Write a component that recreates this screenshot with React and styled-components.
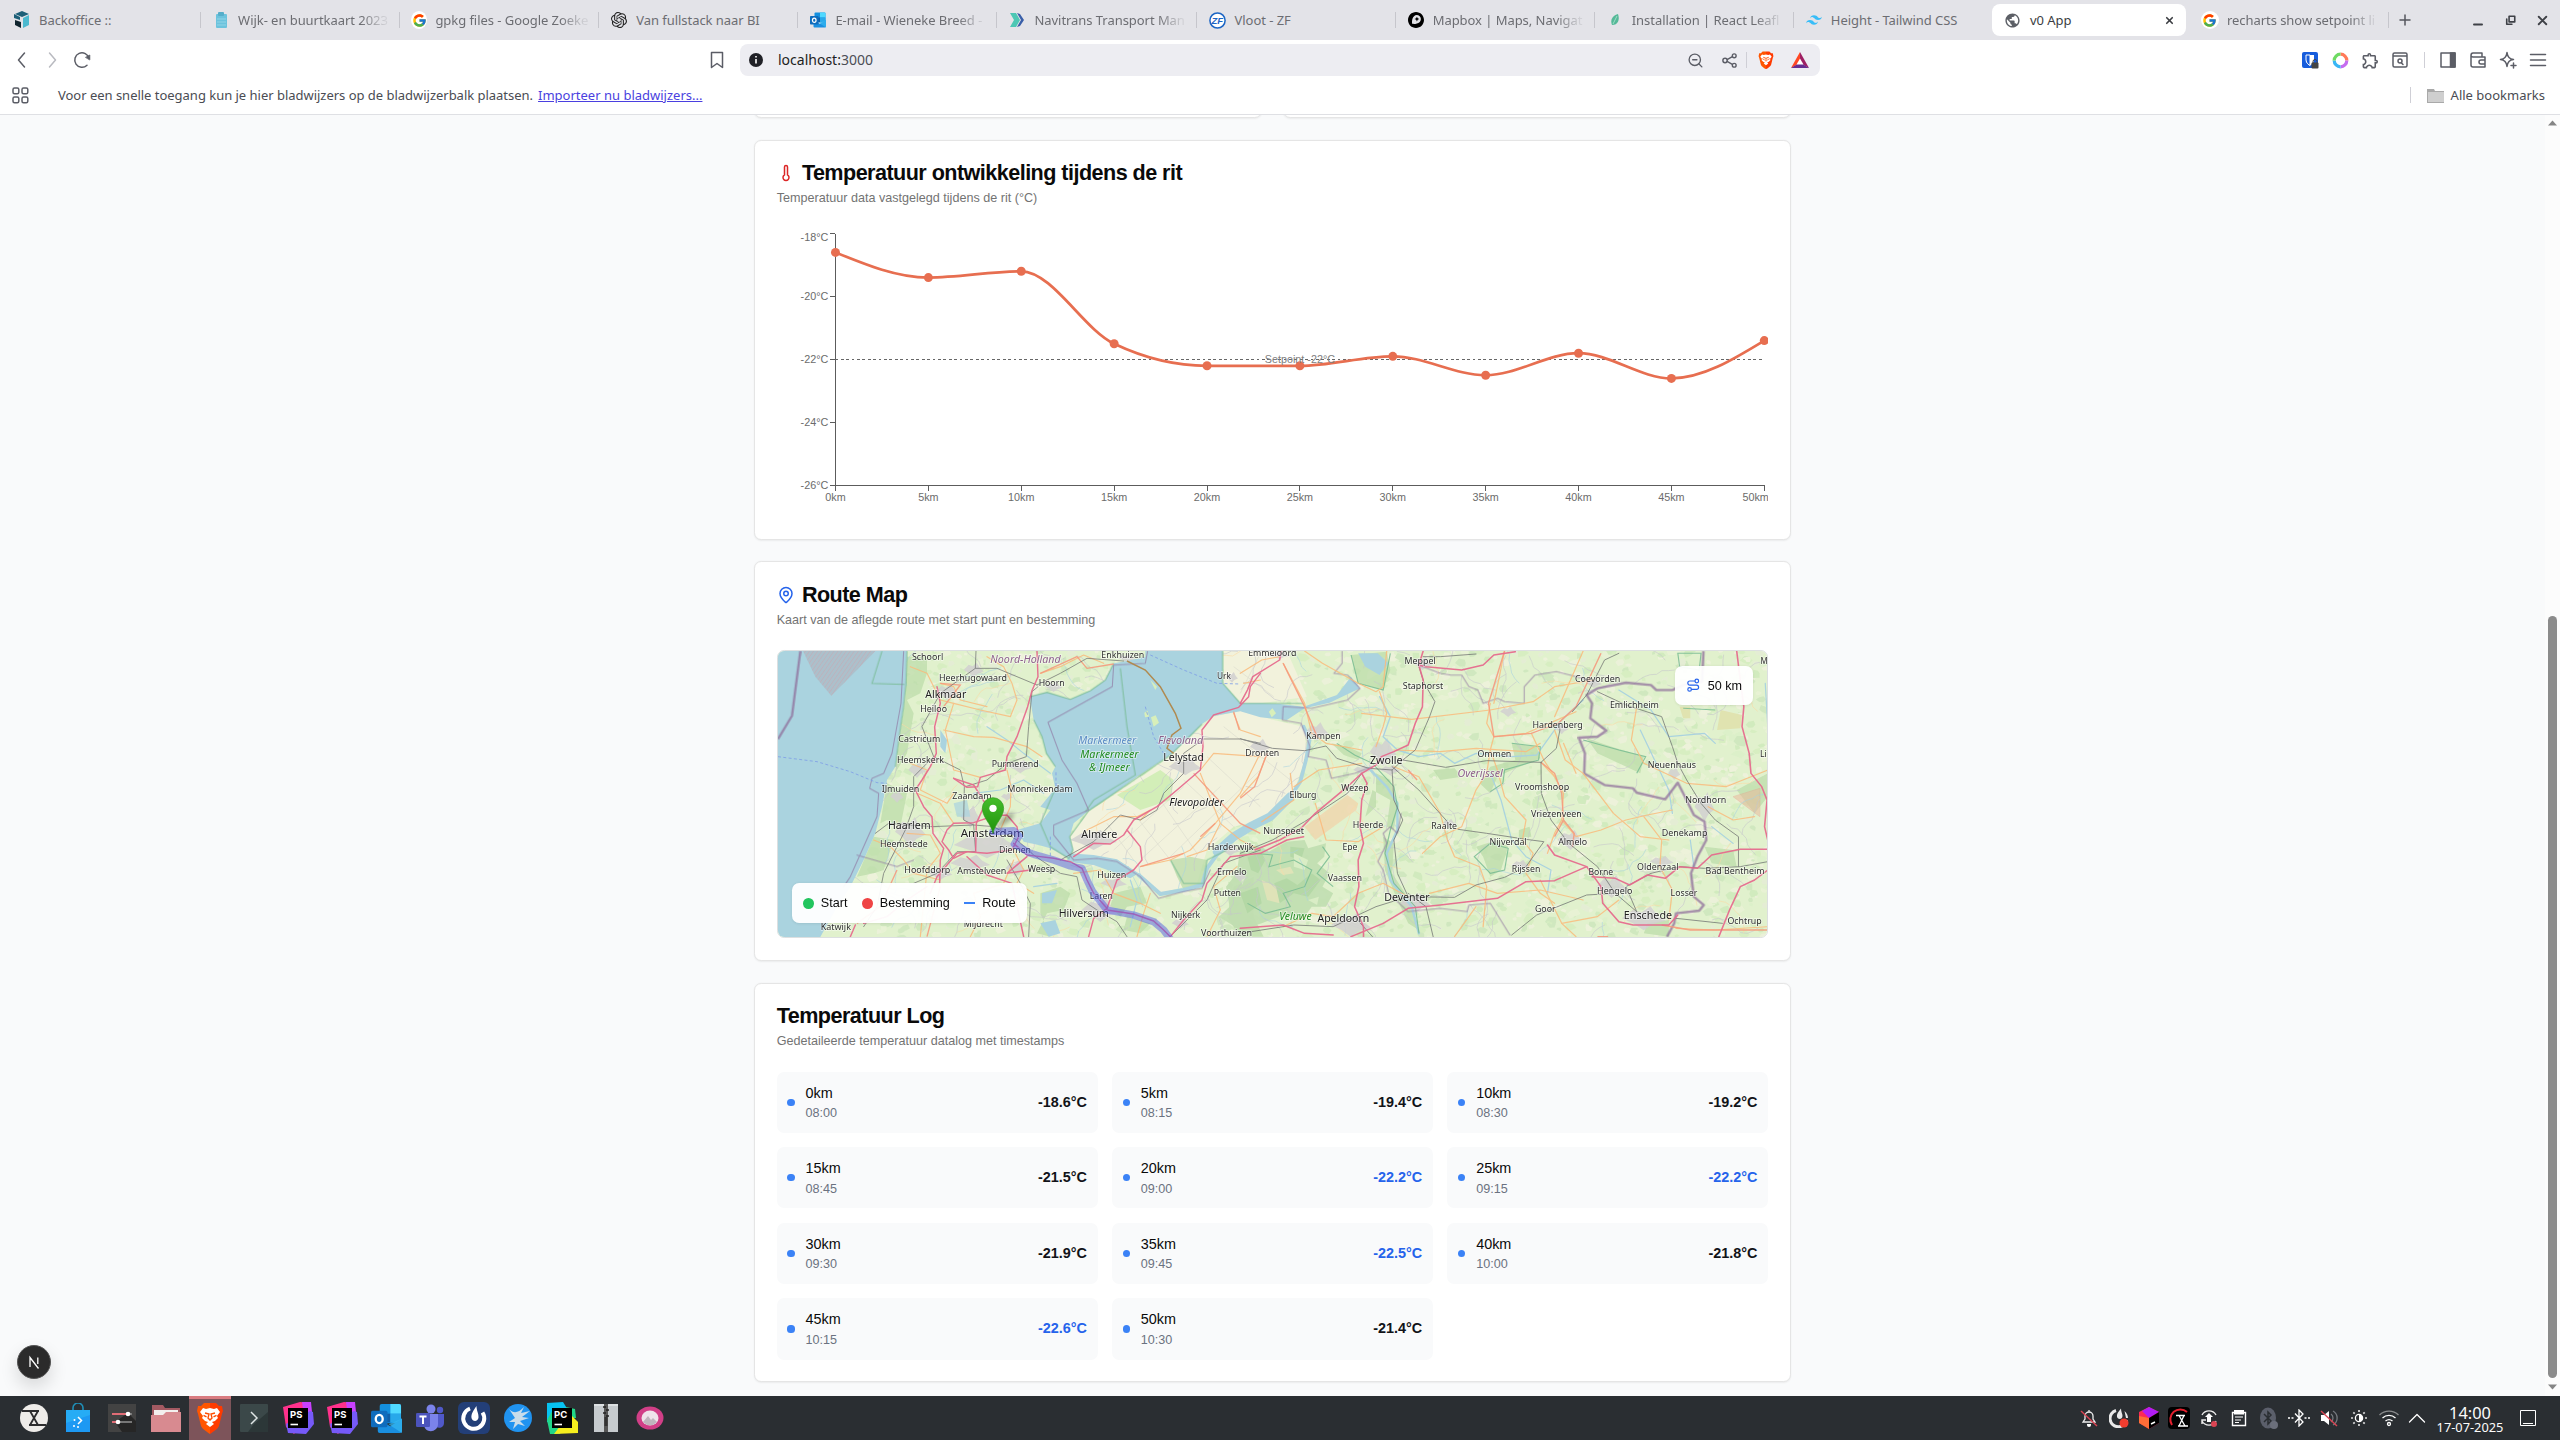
import React from 'react';
import styled, { createGlobalStyle, css } from 'styled-components';
import { ZoomOut, Thermometer, MapPin, Route as RouteIcon, X } from 'lucide-react';
import { FcGoogle } from 'react-icons/fc';
import { MdPublic, MdOutlineExtension } from 'react-icons/md';
import { SiTailwindcss, SiOpenai, SiMapbox } from 'react-icons/si';

const GlobalStyle = createGlobalStyle`
  * { box-sizing: border-box; }
  html, body { margin: 0; padding: 0; overflow: hidden; }
  body { background: #f9fafb; }
  svg { display: block; flex: none; }
`;

const sans = `"Liberation Sans", Arial, sans-serif`;
const noto = `"Noto Sans", sans-serif`;

/* ---------- shell ---------- */
const Screen = styled.div`
  width: 2560px;
  height: 1440px;
  display: flex;
  flex-direction: column;
  overflow: hidden;
  font-family: ${noto};
`;

const TabStrip = styled.div`
  height: 40px;
  flex: none;
  display: flex;
  align-items: center;
  padding-left: 2px;
  background: #e3e3e8;
`;

const Tab = styled.div`
  width: 199.1px;
  height: 32px;
  flex: none;
  display: flex;
  align-items: center;
  position: relative;
  padding: 0 11px 0 12px;
  gap: 9px;
  color: #6c6d72;
  font-size: 13px;
  ${(p) => p.$line && css`
    &::after {
      content: '';
      position: absolute;
      right: 0;
      top: 8px;
      width: 1px;
      height: 16px;
      background: #c6c6cc;
    }
  `}
  ${(p) => p.$active && css`
    width: 194px;
    margin: 0 4px 0 -1px;
    background: #fff;
    border-radius: 8px;
    color: #3b3d42;
  `}
`;

const TabTitle = styled.span`
  flex: 1;
  white-space: nowrap;
  letter-spacing: -0.05px;
  ${(p) => p.$fade && css`
    mask-image: linear-gradient(90deg, #000 calc(100% - 28px), rgba(0, 0, 0, 0.15) calc(100% - 4px));
  `}
`;

const GoogleChip = styled.span`
  width: 18px;
  height: 18px;
  margin: 0 -1px;
  display: grid;
  place-items: center;
  background: #fff;
  border-radius: 50%;
`;

const NewTab = styled.div`
  width: 32px;
  display: grid;
  place-items: center;
`;

const WindowButtons = styled.div`
  margin-left: auto;
  display: flex;
  padding-right: 1px;
`;

const WindowButton = styled.div`
  width: 32.6px;
  display: grid;
  place-items: center;
`;

const Toolbar = styled.div`
  height: 40px;
  flex: none;
  display: flex;
  align-items: center;
  background: #fff;
  color: #5b5d66;
`;

const Slot = styled.div`
  width: ${(p) => p.$w || 30}px;
  display: grid;
  place-items: center;
  ${(p) => p.$push && css`margin-left: auto;`}
`;

const NavGroup = styled.div`
  width: 702px;
  display: flex;
  padding-left: 7px;
`;

const AddressBar = styled.div`
  width: 1080px;
  height: 32px;
  margin-left: 8px;
  display: flex;
  align-items: center;
  padding: 0 5px 0 8px;
  border-radius: 8px;
  background: #ededf2;
`;

const Address = styled.span`
  margin-left: 14px;
  font-size: 14px;
  line-height: 18px;
  margin-top: -1px;
  color: #4c4e56;
  b { font-weight: 400; color: #1d1e22; }
`;

const Divider = styled.div`
  width: 1px;
  height: 16px;
  background: #cfcfd6;
`;

const ToolGroup = styled.div`
  margin-left: auto;
  padding-right: 7px;
  display: flex;
  align-items: center;
`;

const BookmarkBar = styled.div`
  height: 35px;
  flex: none;
  display: flex;
  align-items: center;
  background: #fff;
  border-bottom: 1px solid #dfe0e4;
  padding: 0 15px 4px 12px;
  font-size: 13px;
  color: #4a4c53;
`;

const BookmarkHint = styled.span`
  margin-left: 29px;
  white-space: nowrap;
  letter-spacing: -0.02px;
`;

const HintLink = styled.span`
  margin-left: 5px;
  color: #4a3fe0;
  text-decoration: underline;
`;

const AllBookmarks = styled.div`
  margin-left: auto;
  display: flex;
  align-items: center;
  gap: 7px;
  white-space: nowrap;
  svg { margin-left: 9px; }
`;

const Body = styled.div`
  height: 1281px;
  flex: none;
  display: flex;
  background: #f9fafb;
  position: relative;
`;

const Viewport = styled.div`
  width: 2545px;
  height: 1281px;
  overflow: hidden;
  display: flex;
  flex-direction: column;
  justify-content: flex-end;
  align-items: center;
`;

const ScrollTrack = styled.div`
  width: 15px;
  display: flex;
  flex-direction: column;
  align-items: center;
  background: #fcfcfc;
  padding: 5px 0 6px;
`;

const Thumb = styled.div`
  width: 9px;
  height: 762px;
  margin-top: auto;
  margin-bottom: 6px;
  border-radius: 5px;
  background: #8b8b8b;
`;

/* ---------- page, rendered at 90% browser zoom ---------- */
const Page = styled.main`
  zoom: 0.9;
  width: 1152px;
  flex: none;
  display: flex;
  flex-direction: column;
  gap: 24px;
  padding-bottom: 15.3px;
  font-family: ${sans};
  color: #0a0a0a;
`;

const Card = styled.section`
  background: #fff;
  border: 1px solid #e5e5e5;
  border-radius: 8px;
  box-shadow: 0 1px 2px rgba(0, 0, 0, 0.06);
`;

const SummaryRow = styled.div`
  display: grid;
  grid-template-columns: 1fr 1fr;
  gap: 24px;
`;

const SummaryCard = styled(Card)`
  height: 120px;
`;

const CardHeader = styled.header`
  display: flex;
  flex-direction: column;
  gap: 6px;
  padding: 24px;
`;

const CardTitle = styled.h2`
  margin: 0;
  display: flex;
  align-items: center;
  gap: 8px;
  font-size: 24px;
  line-height: 24px;
  font-weight: 600;
  letter-spacing: -0.6px;
`;

const CardText = styled.p`
  margin: 0;
  font-size: 14px;
  line-height: 20px;
  color: #737373;
`;

const CardBody = styled.div`
  padding: 0 24px 24px;
`;

const ChartSvg = styled.svg`
  width: 1102px;
  height: 320px;
  overflow: hidden;
  font-family: ${sans};
  font-size: 12px;
  fill: #6b6b6b;
`;

const MapFrame = styled.div`
  position: relative;
  height: 320px;
  border: 1px solid #dcdfe0;
  border-radius: 8px;
  overflow: hidden;
`;

const MapSvg = styled.svg`
  width: 100%;
  height: 100%;
`;

const MapPanel = styled.div`
  position: absolute;
  ${(p) => (p.$corner === 'top' ? 'top: 16px; right: 16px;' : 'bottom: 16px; left: 16px;')}
  display: flex;
  align-items: center;
  gap: ${(p) => (p.$corner === 'top' ? 8 : 16)}px;
  padding: 12px;
  border-radius: 8px;
  background: rgba(255, 255, 255, 0.95);
  box-shadow: 0 1px 3px rgba(0, 0, 0, 0.08);
  font-size: 14px;
  line-height: 20px;
  white-space: nowrap;
`;

const LegendItem = styled.div`
  display: flex;
  align-items: center;
  gap: 8px;
`;

const LegendMark = styled.span`
  width: 12px;
  height: ${(p) => (p.$line ? 2.23 : 12)}px;
  border-radius: ${(p) => (p.$line ? 0 : 6)}px;
  background: ${(p) => p.$color};
`;

const LogGrid = styled.div`
  display: grid;
  grid-template-columns: repeat(3, 1fr);
  gap: 16px;
`;

const LogItem = styled.div`
  display: flex;
  align-items: center;
  gap: 12px;
  padding: 12px;
  border-radius: 8px;
  background: #f9fafb;
`;

const LogDot = styled.span`
  width: 8px;
  height: 8px;
  border-radius: 50%;
  background: #3b82f6;
`;

const LogPlace = styled.div`
  flex: 1;
  font-size: 16px;
  line-height: 24px;
`;

const LogTime = styled.div`
  font-size: 14px;
  line-height: 20px;
  color: #6b7280;
`;

const LogValue = styled.div`
  font-size: 16px;
  line-height: 24px;
  font-weight: 600;
  color: ${(p) => (p.$cold ? '#2563eb' : '#111318')};
`;

const DevBadge = styled.div`
  position: absolute;
  left: 17px;
  bottom: 17px;
  width: 34px;
  height: 34px;
  display: grid;
  place-items: center;
  border-radius: 50%;
  border: 1px solid #555;
  background: #2b2b2b;
  box-shadow: 0 8px 18px rgba(0, 0, 0, 0.14);
`;

/* ---------- desktop panel ---------- */
const Taskbar = styled.footer`
  height: 44px;
  flex: none;
  display: flex;
  align-items: center;
  padding: 0 14px 0 12px;
  background: #2a2e32;
  color: #fcfcfc;
`;

const Launcher = styled.div`
  width: 44px;
  height: 44px;
  display: grid;
  place-items: center;
  ${(p) => p.$active && css`
    background: linear-gradient(#d97b80 0 3px, #7d545a 3px);
    background-size: 42px 44px;
    background-repeat: no-repeat;
    background-position: 1px 0;
  `}
`;

const Tray = styled.div`
  margin-left: auto;
  display: flex;
  align-items: center;
`;

const Clock = styled.div`
  width: 80px;
  padding-top: 1px;
  display: flex;
  flex-direction: column;
  align-items: center;
  font-size: 16.4px;
  line-height: 17px;
  small { font-size: 12.8px; line-height: 13px; }
`;

/* ---------- temperature data ---------- */
const readings = [
  ['0km', '08:00', -18.6], ['5km', '08:15', -19.4], ['10km', '08:30', -19.2],
  ['15km', '08:45', -21.5], ['20km', '09:00', -22.2], ['25km', '09:15', -22.2],
  ['30km', '09:30', -21.9], ['35km', '09:45', -22.5], ['40km', '10:00', -21.8],
  ['45km', '10:15', -22.6], ['50km', '10:30', -21.4],
];

const points = readings.map(([, , t], i) => [65 + i * 103.2, 5 + (-18 - t) * 35]);

function monotonePath(p) {
  const n = p.length;
  const slope = (i) => (p[i + 1][1] - p[i][1]) / (p[i + 1][0] - p[i][0]);
  const m = p.map((_, i) => {
    if (i === 0 || i === n - 1) return null;
    const a = slope(i - 1);
    const b = slope(i);
    return (Math.sign(a) + Math.sign(b)) * Math.min(Math.abs(a), Math.abs(b), 0.25 * Math.abs(a + b)) || 0;
  });
  m[0] = (3 * slope(0) - m[1]) / 2;
  m[n - 1] = (3 * slope(n - 2) - m[n - 2]) / 2;
  let d = `M${p[0]}`;
  for (let i = 0; i < n - 1; i += 1) {
    const h = (p[i + 1][0] - p[i][0]) / 3;
    d += `C${p[i][0] + h},${p[i][1] + m[i] * h} ${p[i + 1][0] - h},${p[i + 1][1] - m[i + 1] * h} ${p[i + 1]}`;
  }
  return d;
}

function TemperatureChart() {
  const ticks = [-18, -20, -22, -24, -26];
  return (
    <ChartSvg viewBox="0 0 1102 320">
      <g stroke="#5c5c5c" strokeWidth="1.11" fill="none" shapeRendering="crispEdges">
        <path d="M65 5V285H1097" />
        {ticks.map((t) => <path key={t} d={`M59 ${5 + (-18 - t) * 35}h6`} />)}
        {points.map(([x]) => <path key={x} d={`M${x} 285v6`} />)}
      </g>
      {ticks.map((t) => (
        <text key={t} x="57" y={(t === -18 ? 9.5 : 5 + (-18 - t) * 35) + 4.3} textAnchor="end">{`${t}°C`}</text>
      ))}
      {readings.map(([km], i) => (
        <text key={km} x={i === 10 ? 1102 : points[i][0]} y="301.8" textAnchor={i === 10 ? 'end' : 'middle'}>{km}</text>
      ))}
      <path d="M65 145H1097" stroke="#666" strokeWidth="1.11" strokeDasharray="3 3" shapeRendering="crispEdges" />
      <path d={monotonePath(points)} fill="none" stroke="#e76e50" strokeWidth="3" />
      {points.map(([x, y]) => <circle key={x} cx={x} cy={y} r="5" fill="#e76e50" />)}
      <text x="581" y="149.3" textAnchor="middle" fill="#808080">Setpoint -22°C</text>
    </ChartSvg>
  );
}

/* ---------- route map ---------- */
const eastX = (x) => 1500 + x * 1.0714;
const EAST = 'translate(1500 300) scale(1.0714 1)';

const places = [
  ['Schoorl', 515, 609, 351], ['Noord-Holland', 750, 961, 358, 'region'], ['Enkhuizen', 1083, 1212, 345],
  ['Heerhugowaard', 596, 800, 412], ['Alkmaar', 555, 678, 463, 'city'], ['Hoorn', 895, 973, 427],
  ['Heiloo', 540, 620, 505], ['Castricum', 474, 600, 596], ['Heemskerk', 470, 611, 658],
  ['IJmuiden', 424, 537, 746], ['Haarlem', 443, 571, 855, 'city'], ['Heemstede', 419, 562, 913],
  ['Hoofddorp', 492, 630, 989], ['Amstelveen', 651, 798, 993], ['Zaandam', 636, 754, 769],
  ['Purmerend', 754, 895, 672], ['Monnickendam', 801, 997, 746], ['Amsterdam', 661, 851, 881, 'city'],
  ['Diemen', 776, 872, 929], ['Weesp', 862, 945, 987], ['Almere', 1023, 1131, 884, 'city'],
  ['Huizen', 1071, 1158, 1004], ['Laren', 1048, 1118, 1067], ['Hilversum', 955, 1106, 1119, 'city'],
  ['Markermeer', 1014, 1188, 600, 'lake'], ['Markermeer', 1020, 1195, 642, 'nature'], ['& IJmeer', 1046, 1168, 681, 'nature'],
  ['Flevoland', 1253, 1389, 600, 'region'], ['Lelystad', 1269, 1391, 652, 'city'], ['Flevopolder', 1287, 1450, 786, 'island'],
  ['Urk', 1430, 1472, 408], ['Harderwijk', 1402, 1540, 922], ['Ermelo', 1430, 1519, 997],
  ['Putten', 1420, 1502, 1060], ['Nijkerk', 1292, 1380, 1126], ['Voorthuizen', 1382, 1535, 1178],
  ['Mijdrecht', 670, 788, 1152], ['Katwijk', 241, 332, 1160],
];

const eastPlaces = [
  ['Emmeloord', 22, 157, 38], ['Meppel', 460, 547, 62], ['Staphorst', 455, 568, 138], ['Kampen', 185, 281, 286],
  ['Dronten', 14, 109, 338], ['Zwolle', 363, 454, 360, 'city'], ['Wezep', 283, 359, 444], ['Elburg', 138, 213, 465],
  ['Nunspeet', 64, 178, 572], ['Heerde', 315, 400, 554], ['Epe', 286, 328, 621], ['Vaassen', 245, 341, 713],
  ['Deventer', 403, 530, 772, 'city'], ['Apeldoorn', 216, 361, 834, 'city'], ['Veluwe', 109, 200, 828, 'nature'],
  ['Raalte', 535, 607, 559], ['Ommen', 664, 759, 342], ['Overijssel', 608, 735, 399, 'region'],
  ['Hardenberg', 818, 959, 254], ['Coevorden', 937, 1064, 115], ['Emlichheim', 1035, 1172, 194],
  ['Vroomshoop', 769, 921, 440], ['Vriezenveen', 814, 956, 522], ['Nijverdal', 698, 802, 605],
  ['Almelo', 890, 971, 607], ['Rijssen', 760, 840, 688], ['Borne', 975, 1044, 695], ['Hengelo', 999, 1098, 753],
  ['Goor', 825, 883, 807], ['Enschede', 1074, 1209, 825, 'city'], ['Oldenzaal', 1111, 1227, 680],
  ['Denekamp', 1180, 1308, 578], ['Nordhorn', 1246, 1361, 480], ['Neuenhaus', 1141, 1276, 375],
  ['Losser', 1205, 1280, 759], ['Bad Bentheim', 1303, 1468, 694], ['Ochtrup', 1364, 1460, 842],
  ['Li', 1455, 1474, 342], ['M', 1457, 1477, 61],
].map(([n, a, b, y, k]) => [n, eastX(a), eastX(b), y + 300, k]);

const labelColor = { region: '#8d618b', lake: '#5a8bc4', nature: '#1f8a1f', island: '#1c1c1c', city: '#222' };

const towns = [
  [620, 455, 34, 24], [700, 390, 30, 22], [940, 440, 26, 16], [510, 875, 46, 44], [470, 770, 20, 18], [530, 690, 26, 24],
  [690, 830, 30, 34], [740, 915, 100, 40], [690, 970, 60, 26], [840, 680, 36, 20], [1060, 900, 70, 30], [1335, 680, 50, 26],
  [1080, 1110, 56, 36], [1470, 930, 30, 18], [600, 1000, 36, 20], [825, 985, 30, 24], [1160, 355, 26, 12], [1475, 412, 18, 16],
  [1320, 1150, 26, 16], [1500, 1010, 18, 16], [1120, 1030, 40, 18], [800, 770, 18, 12],
].concat([
  [215, 275, 34, 28], [55, 320, 30, 24], [400, 335, 40, 42], [420, 390, 30, 16], [310, 855, 60, 36], [490, 790, 46, 30], [510, 70, 30, 20],
  [585, 550, 20, 14], [925, 600, 40, 30], [1040, 740, 46, 34], [1130, 835, 66, 36], [1180, 665, 36, 18], [1300, 500, 30, 44],
  [785, 675, 26, 16], [750, 215, 24, 16], [900, 265, 20, 18], [990, 130, 24, 14], [1215, 400, 18, 20], [340, 390, 26, 14], [110, 45, 34, 12],
].map(([x, y, a, b]) => [eastX(x), y + 300, a, b]));

const motorways = [
  'M890 333L893 410L875 452L862 500L830 590L800 650L795 690L720 712L712 740L680 742L640 715',
  'M590 440L600 490L583 560L588 640L570 680L545 720L525 750L550 800L575 830L578 880L610 925L600 960L598 1030',
  'M640 715L700 735L735 790L708 850L706 935',
  'M640 850L700 848L760 828L800 825L830 860L835 890L815 930L740 940L680 935L640 955L625 930L605 905L620 870L640 850',
  'M680 935L650 940L590 1010L570 1060M680 950L740 1005L815 1030L850 1190',
  'M820 910L860 945L940 955L990 965L1025 985L1040 1020L1060 1060L1100 1105L1060 1135L1045 1190',
  'M860 950L800 1000L870 990M1100 1110L1180 1122L1240 1143L1270 1170L1290 1190',
  'M1000 950L1060 910L1110 912L1150 885L1180 840L1250 800L1310 750L1380 690L1388 620L1385 570L1420 525L1495 502L1525 470L1530 440L1560 400',
  'M1160 870L1200 920L1205 960L1180 990L1130 1020L1100 1105',
  'M1290 1190L1330 1140L1385 1080L1400 1030L1470 950L1560 940L1640 900L1690 890',
  'M370 1150L440 1130L500 1080L560 1040M330 1190L345 1155',
];
const eastMotorways = [
  'M0 190L20 150L35 110L110 60L115 33', 'M512 33L500 75L512 120L510 200L490 250L470 315L430 335L395 350L380 375L340 400L300 440L210 520L170 565L110 600L40 630',
  'M500 75L520 80L620 90L680 75L710 45L770 35', 'M340 400L355 430L340 480L335 560L345 610L330 660L332 740L320 800L345 860L345 890',
  'M0 865L120 855L180 880L260 885', 'M310 890L400 850L470 805L560 795L720 775L800 725L880 722L970 680', 'M860 615L880 645L970 680L1010 740L1015 790L1060 845L1100 855L1200 855L1225 825',
  'M985 710L1050 715L1090 735L1140 705L1190 715L1230 680L1280 685L1320 645L1400 628L1477 628',
  'M1390 33L1400 120L1410 200L1405 260L1425 340L1430 400L1460 440L1475 480L1468 560L1477 600', 'M1340 890L1370 810L1400 740L1440 720L1477 690',
];
const rails = [
  'M707 333L705 385L770 385L890 435M705 385L600 460L545 560L580 650L660 690L672 740L670 840L700 855',
  'M893 440L875 455L865 560L858 650L800 670L740 720L675 740', 'M890 435L960 400L1040 355L1150 363', 'M405 880L445 850L575 860L700 855L760 860L830 900L880 945L960 1000L1010 1010L1025 1080L1070 1110L1130 1145L1160 1190',
  'M580 650L520 710L520 800L495 870L470 920L430 1000L410 1100L370 1160', 'M700 855L706 935L650 935L590 1000L520 1030', 'M800 960L840 1030L870 1090L865 1190',
  'M960 960L1060 905L1140 825L1200 840L1250 810L1270 760L1330 700L1330 640L1390 597L1500 597L1560 610', 'M1290 1190L1400 1080L1450 970L1560 930',
];
const eastRails = [
  'M0 296L90 325L180 332L240 318L270 355L360 385L425 390L455 360L575 382L690 362L842 367', 'M512 50L560 50L660 42M500 80L515 130L545 185L530 230L490 330L455 360',
  'M425 390L430 480L455 540L430 600L440 700L470 770L600 772L660 735L740 712L800 680L850 605L800 598L690 580L610 568', 'M425 380L500 450L580 545',
  'M842 367L843 460L870 540L920 610L1000 680L1050 760L1110 815M842 367L885 325L895 270L890 250', 'M930 215L970 165L1020 60L1060 40', 'M470 770L380 800L320 830L260 860L150 855L0 880M470 760L520 800L540 890M320 830L370 890',
  'M1000 155L1080 195L1180 230L1210 320L1225 370L1250 420L1290 490L1330 540L1395 590L1395 680', 'M1230 680L1300 685L1400 680L1477 665', 'M1110 815L1080 740L1150 700L1230 680', 'M760 885L830 825L970 765L1050 760', 'M1220 835L1350 850',
  'M0 640L90 600L180 545L300 460L340 400',
];
const primaries = [
  'M510 380L560 400L600 480L640 490L720 510L810 530L830 480L815 430L790 380L740 350', 'M610 570L700 590L760 592L860 620L905 650', 'M640 490L615 570L640 690L720 712',
  'M900 400L960 380L1030 345L1090 370', 'M510 670L560 690L540 750L620 790L640 760M530 760L600 790L640 850', 'M800 690L812 740L810 800L780 870', 'M500 880L570 885L600 940L560 990L540 1190',
  'M400 900L450 920L490 960L520 1000L600 1020', 'M820 930L850 990L830 1030L880 1060', 'M1000 1000L1080 990L1120 1060L1200 1090L1260 1120', 'M1040 870L1120 830L1190 830L1230 810L1200 840',
  'M1380 700L1440 850L1400 930L1340 950M1380 690L1420 640L1560 650', 'M1440 850L1500 900L1560 930', 'M1200 980L1290 960L1350 930L1425 850L1500 760L1560 640', 'M1480 520L1500 570L1560 590', 'M1190 1190L1210 1120L1230 1060',
  'M600 430L640 440L660 480L740 500', 'M690 1190L720 1130L700 1060L790 1030L820 960', 'M1400 1190L1440 1110L1420 1040L1490 980', 'M1510 430L1560 420',
];
const eastPrimaries = [
  'M120 70L180 190L200 280L240 310L340 330', 'M180 33L230 70L330 130L380 155L400 140L410 33', 'M390 155L410 220L400 260L380 320', 'M340 220L480 238L700 210L820 185L880 140L990 120', 'M700 190L690 250L710 290L700 330L690 400L660 450L620 560L560 590L510 640',
  'M710 190L740 33M710 290L800 280L940 215', 'M430 330L560 335L660 325L800 335L840 310', 'M430 380L500 410L560 520L580 600L600 650L670 680L690 740L680 860', 'M842 367L880 410L905 460L900 540L880 580L860 640', 'M700 330L720 390L740 470L800 540L790 600L820 640L800 700L840 760L880 790',
  'M815 280L850 360L880 410M880 270L910 360L960 400L1045 520L1120 590L1200 600', 'M905 310L940 400M900 540L940 590L1010 570L1080 540L1140 525L1210 510', 'M1110 200L1095 300L1130 370L1250 430L1360 440L1477 390', 'M1130 530L1180 600L1175 680L1210 750L1200 840',
  'M0 470L50 410L75 340M150 440L220 390L340 370M60 545L150 480L140 400', 'M210 490L240 600L330 605L400 560', 'M120 860L200 820L260 830L330 760L400 730L470 770', 'M530 760L640 730L720 760L840 750L960 780', 'M0 100L60 60L110 50', 'M900 850L1000 830L1060 780M1220 865L1330 870L1477 860', 'M1310 500L1380 540L1440 530M960 33L880 230', 'M600 890L660 800M840 720L900 850L940 890',
];
const borders = [
  'M490 333L482 490L455 640L430 700L395 715L388 745L415 760L410 830L330 1010L310 1040', 'M350 945L470 980L520 960', 'M1222 333L1215 370L1120 375L1116 440L923 547L965 660L1010 730L1045 810L940 855L940 885L1000 960L1070 955L1130 965L1200 1010L1255 1075L1330 1055L1385 1045L1410 990',
];
const eastBorders = [
  'M285 33L285 70L262 100L300 105L335 145L300 180L200 205L120 200L118 240L170 250L195 320L190 350L240 360L255 415L320 400L370 380',
  'M500 75L560 100L590 105L620 105L640 140L665 150L680 190L720 175L740 185L795 190L795 140L825 105L885 95L940 110L990 125',
  'M400 580L420 560L440 580L450 520M400 580L410 610L385 665L400 690L415 760L470 815L560 805L635 815L640 795L700 790L755 885',
];

function seeded(seed) {
  let s = seed;
  return () => {
    s = (s * 16807) % 2147483647;
    return s / 2147483647;
  };
}

function buildTexture() {
  const rnd = seeded(4711);
  const fills = ['#d3edbd', '#f2f2e0', '#daf0c8', '#ecf3d8', '#cbe8b8', '#e6ecd8', '#f0f1de', '#c9e4ba'];
  const patches = Array.from({ length: 2600 }, () => {
    const x = 380 + rnd() * 2720;
    const y = 325 + rnd() * 870;
    const r = 4 + rnd() * 12;
    const d = Array.from({ length: 6 }, (_, i) => {
      const a = (i / 6) * Math.PI * 2;
      const q = r * (0.5 + rnd() * 0.7);
      return `${(x + Math.cos(a) * q * 1.3).toFixed(1)},${(y + Math.sin(a) * q).toFixed(1)}`;
    }).join('L');
    return { d: `M${d}Z`, fill: fills[Math.floor(rnd() * fills.length)] };
  });
  const lanes = Array.from({ length: 260 }, (_, k) => {
    let x = 420 + rnd() * 2650;
    let y = 330 + rnd() * 860;
    let a = rnd() * 6.28;
    let d = `M${x.toFixed(0)} ${y.toFixed(0)}`;
    for (let i = 0; i < 7; i += 1) {
      a += (rnd() - 0.5) * 1.3;
      x += Math.cos(a) * 19;
      y += Math.sin(a) * 19;
      d += `L${x.toFixed(0)} ${y.toFixed(0)}`;
    }
    return { d, stroke: k % 5 === 0 ? '#a9d3e0' : k % 6 === 0 ? '#fbd9a4' : '#c6c6cc' };
  });
  return { patches, lanes };
}

const texture = buildTexture();

function Lines({ base, east, ...rest }) {
  return (
    <g fill="none" strokeLinejoin="round" strokeLinecap="round" {...rest}>
      {base.map((d) => <path key={d} d={d} />)}
      <g transform={EAST}>{east.map((d) => <path key={d} d={d} />)}</g>
    </g>
  );
}

function RouteMap() {
  return (
    <MapSvg viewBox="113 333 2969 858" preserveAspectRatio="none">
      <defs>
        <pattern id="hatch" width="10" height="10" patternUnits="userSpaceOnUse" patternTransform="rotate(35)">
          <path d="M0 0V10" stroke="#d79aa0" strokeWidth="3" opacity=".6" />
        </pattern>
        <linearGradient id="pin" x1="0" y1="0" x2="0" y2="1">
          <stop offset="0" stopColor="#45bd2b" />
          <stop offset="1" stopColor="#1f930c" />
        </linearGradient>
        <filter id="soft"><feGaussianBlur stdDeviation="6" /></filter>
      </defs>

      <path d="M113 333H3090V1200H113Z" fill="#e1f1cd" />
      <g opacity=".7">{texture.patches.map((p) => <path key={p.d} d={p.d} fill={p.fill} />)}</g>

      <path d="M1450 333H1640L1700 470L1560 490L1500 490L1450 430Z" fill="#f2f2dc" />
      <path d="M1500 512L1600 540L1690 560L1700 640L1660 760L1560 840L1480 860L1400 930L1370 1030L1260 1060L1190 1000L1100 955L1000 945L990 890L1045 815L1190 720L1290 650L1385 560L1420 530Z" fill="#f2f2dd" />
      <path d="M1130 765L1260 690L1300 720L1290 780L1200 810Z" fill="#d3eeb8" />
      <g stroke="#dcdccf" strokeWidth="2" fill="none">
        <path d="M1100 850L1180 960M1180 820L1290 960M1260 780L1370 940M1330 720L1480 860M1400 650L1560 800M1120 930L1330 740M1200 960L1440 740M1290 950L1560 690M1450 560L1650 720M1480 380L1600 470M1560 340L1500 460" />
      </g>

      <g fill="#bcdcaa" opacity=".75">
        <path d="M500 350L560 350L560 400L540 460L500 480L520 520L500 640L470 690L465 700L480 580L495 480Z" />
        <path d="M440 730L500 760L480 860L440 840L420 850L430 790Z" />
        <path d="M400 890L460 900L430 990L400 1000L350 1010Z" />
        <path d="M1290 960L1350 950L1400 960L1390 1030L1330 1050L1310 1010Z" />
        <path d="M900 1060L960 1040L990 1060L970 1110L920 1120L890 1180L930 1190L900 1120Z" />
        <path d="M1120 1060L1200 1040L1220 1090L1160 1100L1140 1130L1110 1100Z" />
        <path d="M1480 1040L1540 1010L1540 1130L1570 1190L1500 1190L1460 1130Z" />
        <path d="M1160 1130L1230 1150L1200 1180L1150 1170Z" />
      </g>
      <g transform={EAST}>
        <path d="M0 625L60 620L80 635L130 605L180 600L190 625L240 610L235 650L215 670L250 700L230 740L260 760L240 800L200 800L180 830L120 825L60 850L0 870L-60 830L-30 800L-40 740L-10 700Z" fill="#c0deb0" opacity=".9" />
        <path d="M20 650L60 640L70 660L50 700L30 690ZM95 730L130 715L160 735L200 700L225 720L190 770L150 760L110 790ZM0 760L50 740L60 790L20 820ZM140 620L180 625L170 660L140 650Z" fill="#afd5a2" opacity=".75" />
        <path d="M60 720L100 740L110 790L75 780ZM100 690L140 680L150 700L120 705Z" fill="#dfe3b8" />
        <path d="M150 640L190 660L180 690L150 680ZM190 780L220 770L215 795ZM0 700L15 710L5 735Z" fill="#d9edc5" />
        <path d="M180 560L300 465L330 490L325 510L210 600Z" fill="#f0d6ac" opacity=".8" />
        <g fill="#bcdcaa" opacity=".75">
          <path d="M310 45L410 35L420 90L400 150L330 130Z" />
          <path d="M255 310L300 320L340 340L330 360L290 345Z" />
          <path d="M380 400L420 420L440 500L430 570L410 560L420 480L370 450L350 530L380 500Z" />
          <path d="M400 590L430 610L425 700L480 790L500 870L470 850L440 780L405 690Z" />
          <path d="M760 310L830 320L840 355L760 390L720 410L700 460L670 430L700 380L770 360Z" />
          <path d="M660 620L720 600L750 620L730 690L700 710L680 650Z" />
          <path d="M970 295L1040 320L1130 350L1120 400L1060 370L1000 340Z" />
          <path d="M1390 450L1477 400L1477 470L1440 520Z" />
          <path d="M1300 620L1380 630L1390 680L1320 670ZM1140 850L1200 840L1200 890L1130 880Z" />
          <path d="M540 390L600 385L620 410L560 420ZM780 570L810 560L815 590L780 595Z" />
        </g>
        <path d="M1230 200L1260 200L1260 235L1240 235ZM1345 210L1405 225L1400 265L1335 270Z" fill="#e0e3b0" />
        <path d="M1380 470L1455 445L1455 530Z" fill="#ecb69a" opacity=".5" stroke="#e69a8a" strokeWidth="2" />
      </g>

      <g fill="none" strokeWidth="2.3" opacity=".75">{texture.lanes.map((l) => <path key={l.d} d={l.d} stroke={l.stroke} />)}</g>
      <g fill="#d2d0d0" opacity=".85">
        {towns.map(([x, y, a, b]) => (
          <path key={`${x}-${y}`} d={`M${x - a} ${y}L${x - a * 0.5} ${y - b * 0.7}L${x - a * 0.1} ${y - b * 0.5}L${x + a * 0.3} ${y - b}L${x + a * 0.6} ${y - b * 0.3}L${x + a} ${y + b * 0.2}L${x + a * 0.4} ${y + b * 0.5}L${x} ${y + b}L${x - a * 0.5} ${y + b * 0.4}Z`} />
        ))}
      </g>

      <g fill="#aad3df">
        <path d="M113 333H500L497 430L490 500L478 580L465 680L440 720L425 800L405 880L370 960L330 1040L290 1100L240 1191H113Z" />
        <path d="M1215 333H1447V430L1500 490H1560L1620 492L1690 500L1790 465L1832 410L1859 445L1768 488L1693 505L1640 540L1560 532L1500 514L1420 528L1385 552L1340 600L1290 645L1190 710L1115 765L1045 812L1000 850L988 890L998 930L985 955L930 925L895 915L850 905L830 870L900 850L930 810L900 800L945 745L935 700L945 680L918 640L905 590L880 540L868 470L920 457L990 478L1050 452L1095 420L1120 370L1160 363L1215 350Z" />
        <path d="M985 940L1060 945L1130 958L1195 1000L1170 1015L1060 975L980 965Z" />
        <path d="M330 40L385 40L415 70L390 105L350 80Z" transform={EAST} />
        <path d="M600 570L620 600L615 640L600 620ZM905 1060L950 1050L935 1090L905 1090ZM900 1150L945 1140L960 1180L925 1190Z" />
        <path d="M640 790L680 780L690 830L650 830Z" opacity=".7" />
      </g>
      <g fill="none" stroke="#aad3df" strokeLinecap="round" strokeLinejoin="round">
        <path d="M1195 1005L1260 1062L1330 1050L1385 1035L1400 985L1440 930" strokeWidth="12" />
        <path d="M1430 935L1480 890L1530 860L1590 830L1650 770" strokeWidth="26" />
        <path d="M1650 770L1680 725L1697 660L1708 600L1690 560" strokeWidth="11" />
        <path d="M360 385L410 440L440 490L440 570L410 640L420 720L480 800L500 880" strokeWidth="7" transform={EAST} />
        <path d="M390 170L420 230L400 290L440 330L500 350L560 340L600 370L660 340L760 350L830 345L900 240L960 180" strokeWidth="4" transform={EAST} />
        <path d="M1060 150L1150 210L1200 290L1300 280L1330 310M1120 270L1200 450L1210 520M1320 560L1380 610M1470 130L1477 260M700 400L730 480L760 600L800 650L870 690L860 760M1260 600L1270 680" strokeWidth="3.5" transform={EAST} />
        <path d="M740 560L800 600L850 640L930 700M700 760L780 750L850 720L910 760M880 1040L950 1030M1170 1020L1190 1080L1170 1160" strokeWidth="3.5" />
      </g>
      <g fill="#d8efba">
        <path d="M1212 518L1222 512L1226 530L1214 532ZM1232 532L1246 526L1256 548L1240 560ZM1230 420L1250 440L1245 450Z" />
        <path d="M80 215L90 205L100 220L88 232Z" transform={EAST} />
      </g>
      <g fill="none" stroke="#77bb92" strokeWidth="3.2" opacity=".85">
        <path d="M425 333L395 430L492 433M500 333L497 430L490 500L478 580L465 680" />
        <path d="M868 470L920 457L990 478L1050 452L1095 420L1120 370M880 540L905 590L918 640L945 680M945 745L900 850L930 920L985 955L998 930L988 890L1045 812L1290 645L1385 552" />
        <path d="M1140 385L1160 560L1185 705L1060 780L1035 815M1447 333V430L1500 490H1690" />
        <path d="M1290 960L1330 1030L1390 1030L1400 960L1460 930" />
        <g transform={EAST}>
          <path d="M40 640L90 645L80 680L150 660L200 690L180 740L120 760L140 800L70 820L20 790M230 620L250 650L215 700L260 740" />
          <path d="M310 45L330 130L400 150L420 40M270 310L320 345L370 370L430 440L440 500L420 570L405 640L430 730L490 800L500 880" />
          <path d="M760 310L840 320L835 360L740 390L735 430L700 455M655 650L700 610L750 625L740 690L700 700Z" />
          <path d="M960 300L1060 330L1135 350L1110 400M1225 40H1290L1285 90L1230 80ZM1240 205L1330 210" />
        </g>
      </g>
      <path d="M188 333L225 410L273 467L340 400L405 333Z" fill="#b0a9b4" opacity=".45" />
      <path d="M188 333L225 410L273 467L340 400L405 333Z" fill="url(#hatch)" />

      <Lines base={borders} east={eastBorders} stroke="#8f74a0" strokeWidth="3.2" opacity=".65" />
      <g fill="none" stroke="#8f6f9b" strokeWidth="7" strokeLinejoin="round" opacity=".75">
        <path d="M180 333L155 527L113 597" />
        <path d="M1297 33L1293 125L1240 135L1210 150L1165 150L1150 135L1080 128L1000 145L970 165L985 190L980 235L1025 272L1000 290L948 293L965 340L963 400L1020 435L1100 445L1110 458L1190 478L1225 428L1245 470L1270 525L1300 545L1305 600L1280 650L1262 700L1270 770L1298 795L1285 812L1220 820L1215 850L1195 890" transform={EAST} />
      </g>
      <g fill="none" stroke="#7f9fe6" strokeWidth="3" strokeDasharray="9 7" opacity=".85">
        <path d="M113 650L230 665L330 695L410 728L440 730M1230 345L1330 390L1430 430L1500 432M1215 500L1240 590L1270 640M947 697V740M930 890V950" />
      </g>

      <Lines base={primaries} east={eastPrimaries} stroke="#fabb7c" strokeWidth="3.5" opacity=".85" />
      <g fill="none" stroke="#f59a7e" strokeWidth="4" opacity=".9">
        <path d="M600 430L660 435L610 500M900 400L1010 350L1040 385L1120 372M1360 700L1500 850L1560 880M1330 940L1200 980M1480 515L1497 570M1425 850L1380 890M470 990L420 1100L350 1150M560 1190L600 1040" />
        <path d="M120 70L180 200L215 290M842 367L880 400L900 460L905 540M880 590L905 540L935 580L930 620M740 33L695 190L710 290L815 280L890 250L940 200L1010 40M75 340L40 440L0 475M470 390L495 420M1000 890H1030M1180 855L1260 870H1477" transform={EAST} />
      </g>
      <Lines base={rails} east={eastRails} stroke="#6d6f6f" strokeWidth="2.7" opacity=".8" />
      <Lines base={motorways} east={eastMotorways} stroke="#e6688c" strokeWidth="4.4" opacity=".92" />
      <path d="M1160 363L1215 390L1260 440L1305 520L1322 565L1295 585L1280 625L1300 640" fill="none" stroke="#b08a50" strokeWidth="4.500" />

      <g fontFamily="Noto Sans, sans-serif" textAnchor="middle">
        {places.concat(eastPlaces).map(([name, a, b, y, kind]) => {
          const size = kind === 'city' ? 32 : kind ? 31 : 28;
          return (
            <text
              key={name + y}
              x={(a + b) / 2}
              y={y + size * 0.34}
              textLength={b - a}
              lengthAdjust="spacingAndGlyphs"
              fontSize={size}
              fontStyle={kind && kind !== 'city' ? 'italic' : 'normal'}
              fill={labelColor[kind] || '#2e2e2e'}
              stroke="#fff"
              strokeOpacity=".55"
              strokeWidth="5"
              paintOrder="stroke"
            >
              {name}
            </text>
          );
        })}
      </g>

      <path d="M758 875L820 872L836 888L822 912L870 940L940 960L990 978L1025 985L1040 1020L1055 1052L1100 1110L1180 1125L1240 1145L1270 1170L1292 1200" fill="none" stroke="#4650e8" strokeOpacity=".45" strokeWidth="22" strokeLinejoin="round" strokeLinecap="round" />
      <path d="M762 872L790 830L822 815L815 838Z" fill="#000" opacity=".3" filter="url(#soft)" />
      <path d="M758 880C752 850 726 832 726 805A32 32 0 0 1 790 805C790 832 764 850 758 880Z" fill="url(#pin)" stroke="#2f9a1c" strokeWidth="2" />
      <circle cx="758" cy="805" r="11" fill="#fff" />
    </MapSvg>
  );
}

/* ---------- small drawings ---------- */
const CubeIcon = () => (
  <svg width="16" height="18" viewBox="0 0 16 18">
    <path d="M8 0L15 3L8 6L1 3Z" fill="#1c5f78" /><path d="M1 9L7 11V17L1 14Z" fill="#10242f" /><path d="M15 4V14L9 17V7Z" fill="#4cb9cf" /><path d="M0 3L6 6V9L0 7Z" fill="#1c5f78" />
  </svg>
);
const ClipIcon = () => (
  <svg width="16" height="18" viewBox="0 0 16 18"><rect x="3" y="3" width="11" height="14" rx="1" fill="#6cc3dd" /><rect x="5" y="1" width="6" height="4" rx="1" fill="#56aeca" /><path d="M4 8h9M4 11h9M4 14h9" stroke="#92d4e6" /></svg>
);
const OutlookIcon = ({ size = 16 }) => (
  <svg width={size} height={size} viewBox="0 0 32 32">
    <rect x="9" y="1" width="22" height="20" rx="2" fill="#1490df" /><path d="M20 1h9a2 2 0 0 1 2 2v8H20Z" fill="#50d9ff" /><path d="M9 11h11v9H9Z" fill="#0f5ea8" /><path d="M20 11h11v9H20Z" fill="#28a8ea" />
    <path d="M7 17L20 24L32 16V29a2 2 0 0 1-2 2H9a2 2 0 0 1-2-2Z" fill="#1a8fe0" /><path d="M32 31L18 22L32 16Z" fill="#35b8f1" opacity=".7" />
    <rect x="0" y="8" width="17" height="17" rx="1.6" fill="#0f6cbd" /><ellipse cx="8.5" cy="16.5" rx="3.6" ry="4.2" fill="none" stroke="#fff" strokeWidth="2.4" />
  </svg>
);
const NavitransIcon = () => (
  <svg width="16" height="16" viewBox="0 0 16 16"><path d="M1 1H7L11 8L7 15H1L5 8Z" fill="#4cc7b4" /><path d="M8 1L11 2L15 8L11 14L8 15L12 8Z" fill="#3a5fa9" /></svg>
);
const ZfIcon = () => (
  <svg width="17" height="17" viewBox="0 0 17 17"><circle cx="8.5" cy="8.5" r="7.6" fill="#fff" stroke="#1c65c4" strokeWidth="1.5" /><text x="8.300" y="11.800" textAnchor="middle" fontFamily="Liberation Sans, sans-serif" fontWeight="700" fontStyle="italic" fontSize="9.500" fill="#1c65c4">ZF</text></svg>
);
const LeafIcon = () => (
  <svg width="16" height="16" viewBox="0 0 16 16"><path d="M11 2C5 4 3 8 5 13C11 13 13 8 11 2Z" fill="#55b998" /><path d="M10 4L6 12" stroke="#9fdcc6" /></svg>
);
const BatIcon = () => (
  <svg width="18" height="16" viewBox="0 0 18 16"><path d="M9 0L0 16L9 11Z" fill="#ff4724" /><path d="M9 0L18 16L9 11Z" fill="#9e1f63" /><path d="M0 16H18L9 10.500Z" fill="#662d91" /><path d="M9 6.500L12.500 12.500H5.500Z" fill="#fff" /></svg>
);
const BraveBadge = ({ w }) => (
  <svg width={w} height={w * 1.14} viewBox="0 0 28 32">
    <defs><linearGradient id={`brave${w}`}><stop offset=".5" stopColor="#ff5601" /><stop offset=".5" stopColor="#ff3a00" /></linearGradient></defs>
    <path d="M8 1H20L23 4L26 4L27 9L26 12L23 24C22 27 17 30 14 32C11 30 6 27 5 24L2 12L1 9L2 4L5 4Z" fill={`url(#brave${w})`} />
    <path d="M14 6L18 7L21 6L24 10L21 14L22 16L19 19L16 20L18 22L14 25L10 22L12 20L9 19L6 16L7 14L4 10L7 6L10 7Z" fill="#fff" />
    <path d="M9 11L13 12L12 16L14 18L16 16L15 12L19 11M7.500 13.500L10.500 15M20.500 13.500L17.500 15" stroke="#ff4d00" strokeWidth="1.4" fill="none" />
  </svg>
);
const Line = ({ d, size = 18, w = 1.5, color = '#5b5d66', children }) => (
  <svg width={size} height={size} viewBox="0 0 18 18" fill="none" stroke={color} strokeWidth={w} strokeLinecap="round" strokeLinejoin="round"><path d={d} />{children}</svg>
);
const IdeIcon = ({ text, colors }) => (
  <svg width="32" height="32" viewBox="0 0 32 32">
    <path d="M1 5L18 0L29 1V13L12 32L4 25Z" fill={colors[0]} /><path d="M20 0H29L30 10L22 14Z" fill={colors[1]} /><path d="M31 10L32 22L24 32L6 31L4 22L28 9Z" fill={colors[2]} />
    <rect x="6" y="6" width="20" height="20" fill="#000" />
    <text x="8" y="16" fontFamily="Inter, sans-serif" fontWeight="700" fontSize="9.500" fill="#fff">{text}</text><path d="M8.500 22.500H16" stroke="#fff" strokeWidth="1.600" />
  </svg>
);
const PyCharmIcon = () => (
  <svg width="32" height="32" viewBox="0 0 32 32">
    <path d="M1 1L17 0L22 8L14 24L1 20Z" fill="#07c3f2" /><path d="M1 18L8 6L20 16L14 32H4Z" fill="#21d789" /><path d="M20 5L29 7L30 16L22 16Z" fill="#21d789" /><path d="M26 14L32 20V31L8 32L14 24Z" fill="#f5ee1e" />
    <rect x="6" y="6" width="20" height="20" fill="#000" />
    <text x="8" y="16" fontFamily="Inter, sans-serif" fontWeight="700" fontSize="9.500" fill="#fff">PC</text><path d="M8.500 22.500H16" stroke="#fff" strokeWidth="1.600" />
  </svg>
);
const XLogo = () => (
  <svg width="28" height="28" viewBox="0 0 28 28"><circle cx="14" cy="14" r="14" fill="#eeece9" /><path d="M2 7H19M9 21H26M10 7L18 21M18 7L10 21" stroke="#2c2c2e" strokeWidth="1.800" fill="none" /></svg>
);
const StoreIcon = () => (
  <svg width="26" height="30" viewBox="0 0 26 30"><path d="M8 8V5a5 5 0 0 1 10 0V8" stroke="#1f8fb8" strokeWidth="1.600" fill="none" /><path d="M1 7H25V29H1Z" fill="#1d99f3" /><path d="M1 7H25V12L1 20Z" fill="#2bb3f5" opacity=".7" /><path d="M13 14l3.500 3.500L13 21" stroke="#fff" strokeWidth="1.500" fill="none" /><circle cx="9.500" cy="17" r="1" fill="#fff" /><circle cx="9" cy="23" r="1" fill="#fff" /><circle cx="13" cy="24" r="1" fill="#fff" /></svg>
);
const SettingsIcon = () => (
  <svg width="28" height="28" viewBox="0 0 28 28"><rect width="28" height="28" fill="#434343" /><path d="M7 18L20 9L28 17V28H14Z" fill="#262626" /><path d="M4 10H24M4 18H24" stroke="#777" strokeWidth="2" /><path d="M4 10H19M4 18H9" stroke="#e06c75" strokeWidth="2" /><circle cx="20" cy="10" r="2.300" fill="#fff" /><circle cx="10" cy="18" r="2.300" fill="#fff" /></svg>
);
const FolderIcon = () => (
  <svg width="30" height="28" viewBox="0 0 30 28"><path d="M1 1H12L14 4H29V26H1Z" fill="#a35a62" /><path d="M3 6H27V14H3Z" fill="#f3efee" /><path d="M0 11H12L15 8H30V28H0Z" fill="#d88a90" /></svg>
);
const TerminalIcon = () => (
  <svg width="28" height="28" viewBox="0 0 28 28"><rect width="28" height="28" rx="1" fill="#3b4849" /><path d="M14 20L28 8V28H8Z" fill="#2c3738" /><path d="M11 8L17 14L11 20" stroke="#dfe5e5" strokeWidth="1.500" fill="none" /></svg>
);
const TeamsIcon = () => (
  <svg width="30" height="28" viewBox="0 0 30 28"><circle cx="16" cy="5" r="4.500" fill="#7b83eb" /><circle cx="25" cy="6" r="3.200" fill="#5059c9" /><path d="M20 10H29V19C29 23 25 25 21 23Z" fill="#5059c9" /><path d="M9 10H23V20C23 29 9 30 9 20Z" fill="#7b83eb" /><rect x="1" y="9" width="14" height="14" rx="1.200" fill="#4b53bc" /><path d="M4.500 12.500H11.500M8 12.500V20" stroke="#fff" strokeWidth="2" /></svg>
);
const MattermostTile = () => (
  <svg width="32" height="32" viewBox="0 0 32 32"><rect width="32" height="32" rx="6" fill="#233f78" /><path d="M12 6.500A10.500 10.500 0 1 0 24.500 10.500" stroke="#fff" strokeWidth="4" fill="none" /><path d="M18.500 4C15 9 13 12 13.500 16C14.500 20 20 20 20.500 15.500C20.800 11 18.500 9 18.500 4Z" fill="#fff" /></svg>
);
const BirdIcon = () => (
  <svg width="28" height="28" viewBox="0 0 28 28"><circle cx="14" cy="14" r="14" fill="#2093f0" /><path d="M5 5C10 10 14 9 20 3L17 9L26 7L18 13L25 14L16 17L21 22L14 20L9 25L11 18L5 18L11 14Z" fill="#c8dcea" /></svg>
);
const ZipIcon = () => (
  <svg width="24" height="28" viewBox="0 0 24 28"><rect width="24" height="28" fill="#c6cbce" /><rect width="24" height="2" fill="#dde1e3" /><path d="M10 0H14V28H10Z" fill="#555" /><path d="M9 3h3M12 6h3M9 9h3M12 12h3" stroke="#222" strokeWidth="1.500" /><rect x="10.500" y="13" width="3" height="9" fill="#333" /></svg>
);
const PinkIcon = () => (
  <svg width="28" height="24" viewBox="0 0 28 24"><ellipse cx="14" cy="12" rx="13.500" ry="11.500" fill="#d13f87" /><ellipse cx="14" cy="12" rx="8.500" ry="7.500" fill="#efe3ea" /><path d="M7 16L12 10L15 14L17 12L21 16L17 19H11Z" fill="#bfb5bd" /></svg>
);

const tabs = [
  { icon: <CubeIcon />, title: 'Backoffice ::', line: true },
  { icon: <ClipIcon />, title: 'Wijk- en buurtkaart 2023', line: true, fade: true },
  { icon: <GoogleChip><FcGoogle size={15} /></GoogleChip>, title: 'gpkg files - Google Zoeke', line: true, fade: true },
  { icon: <SiOpenai size={16} color="#222" />, title: 'Van fullstack naar BI', line: true },
  { icon: <OutlookIcon />, title: 'E-mail - Wieneke Breed -', line: true, fade: true },
  { icon: <NavitransIcon />, title: 'Navitrans Transport Man', line: true, fade: true },
  { icon: <ZfIcon />, title: 'Vloot - ZF', line: true },
  { icon: <SiMapbox size={16} color="#000" />, title: 'Mapbox | Maps, Navigat', line: true, fade: true },
  { icon: <LeafIcon />, title: 'Installation | React Leafl', line: true, fade: true },
  { icon: <SiTailwindcss size={16} color="#38bdf8" />, title: 'Height - Tailwind CSS' },
  { icon: <MdPublic size={17} color="#5c5f66" />, title: 'v0 App', active: true },
  { icon: <GoogleChip><FcGoogle size={15} /></GoogleChip>, title: 'recharts show setpoint li', line: true, fade: true },
];

const ideaPink = ['#ff318c', '#c840ff', '#765af8'];
const launchers = [
  <XLogo />, <StoreIcon />, <SettingsIcon />, <FolderIcon />, <BraveBadge w={28} />, <TerminalIcon />,
  <IdeIcon text="PS" colors={ideaPink} />, <IdeIcon text="PS" colors={ideaPink} />, <OutlookIcon size={31} />,
  <TeamsIcon />, <MattermostTile />, <BirdIcon />, <PyCharmIcon />, <ZipIcon />, <PinkIcon />,
];

const Slash = ({ children }) => (
  <svg width="18" height="18" viewBox="0 0 18 18">{children}<path d="M1 2L17 17" stroke="#da4453" strokeWidth="1.400" /></svg>
);

const tray = [
  <Slash><path d="M3 13L5 10V7a4 4 0 0 1 8 0v3l2 3ZM9 1v2" stroke="#eee" strokeWidth="1.300" fill="none" /><path d="M7 15h4v1a2 2 0 0 1-4 0Z" fill="#fff" /></Slash>,
  <svg width="20" height="20" viewBox="0 0 20 20"><path d="M7 2.500A8.300 8.300 0 1 0 17.500 12" stroke="#e9e9e9" strokeWidth="3" fill="none" /><path d="M12 0.500C9 4 7.500 6 8 9C9 12 13.500 11.500 13.500 8C13.500 5.500 12 4 12 .5ZM15.500 3C18 5 19 8 19 10H17Z" fill="#e9e9e9" /><circle cx="15" cy="15" r="4.500" fill="#f23d2f" /></svg>,
  <svg width="20" height="22" viewBox="0 0 20 22"><path d="M10 0L20 5V16L10 22L0 16V5Z" fill="#fe2857" /><path d="M10 0L20 5L10 11L3 4Z" fill="#af1df5" /><path d="M0 9L10 11V22L0 16Z" fill="#ff8a2a" opacity=".7" /><path d="M20 5V16L10 22V11Z" fill="#000" /><path d="M12 17L16 15" stroke="#fff" strokeWidth="1.500" /></svg>,
  <svg width="22" height="22" viewBox="0 0 22 22"><rect width="22" height="22" rx="4" fill="#000" /><path d="M4 18A10 10 0 0 1 19 5" stroke="#e5202e" strokeWidth="2" fill="none" /><path d="M8 8.500H17M10 19H20M11 8.500L17 19M16 8.500L11 19" stroke="#fff" strokeWidth="1.300" /></svg>,
  <svg width="18" height="18" viewBox="0 0 18 18"><path d="M2 6A8 8 0 0 1 16 6M16 12A8 8 0 0 1 2 12M2 15V11H6" stroke="#eee" strokeWidth="1.400" fill="none" /><path d="M9 4L13 8H11V13H7V8H5Z" fill="#fff" /><circle cx="14" cy="15" r="3" fill="#da4453" /></svg>,
  <svg width="16" height="18" viewBox="0 0 16 18"><path d="M1.500 3.500H14.500V16.500H1.500Z" stroke="#fff" strokeWidth="1.400" fill="none" /><rect x="3" y="1" width="10" height="4.500" fill="#fff" /><path d="M4 8h8M4 11h6M4 13.500h4" stroke="#fff" strokeWidth="1.200" /></svg>,
  <svg width="20" height="22" viewBox="0 0 20 22"><ellipse cx="9" cy="11" rx="8" ry="10.500" fill="#5b5f6b" /><path d="M5 7L12 14L9 17V5L12 8L5 15" stroke="#2a2e32" strokeWidth="1.500" fill="none" /><circle cx="15" cy="18" r="4" fill="#6b6f7b" /></svg>,
  <svg width="22" height="18" viewBox="0 0 22 18"><path d="M7 4.500L15 13L11 17V1L15 5L7 13.500" stroke="#fff" strokeWidth="1.300" fill="none" /><path d="M0 9h2M3.500 9h2M16.500 9h2M20 9h2" stroke="#fff" strokeWidth="1.600" /></svg>,
  <Slash><path d="M1 6H4L9 2V16L4 12H1Z" fill="#fff" /><path d="M11 5A5 5 0 0 1 11 13M13 2A8 8 0 0 1 13 16" stroke="#777b80" strokeWidth="1.300" fill="none" /></Slash>,
  <svg width="18" height="18" viewBox="0 0 18 18"><circle cx="9" cy="9" r="3.600" stroke="#fff" strokeWidth="1.300" fill="none" /><path d="M9 5.400A3.600 3.600 0 0 1 9 12.600Z" fill="#fff" /><path d="M9 1v2M9 15v2M1 9h2M15 9h2M3.300 3.300l1.400 1.400M13.300 13.300l1.400 1.400M3.300 14.700l1.400-1.400M13.300 4.700l1.400-1.400" stroke="#ddd" strokeWidth="1.700" /></svg>,
  <svg width="20" height="18" viewBox="0 0 20 18" fill="none" stroke="#fff" strokeWidth="1.300"><path d="M0.500 6A13.500 13.500 0 0 1 19.500 6" opacity=".45" /><path d="M3.500 9A9.500 9.500 0 0 1 16.500 9M6.500 12A5.500 5.500 0 0 1 13.500 12" /><circle cx="10" cy="15" r="1.500" /></svg>,
];

export default function App() {
  return (
    <Screen>
      <GlobalStyle />
      <TabStrip>
        {tabs.map((t) => (
          <Tab key={t.title} $line={t.line} $active={t.active}>
            {t.icon}
            <TabTitle $fade={t.fade}>{t.title}</TabTitle>
            {t.active && <X size={11} strokeWidth={3.6} color="#3b3d42" />}
          </Tab>
        ))}
        <NewTab><Line d="M9 4V14M4 9H14" color="#55575e" /></NewTab>
        <WindowButtons>
          <WindowButton><Line d="M5 13.500H13" w={2} color="#3f4147" /></WindowButton>
          <WindowButton><Line d="M7.500 4.500H13.500V10.500H7.500ZM5 7.500V13H10.500" w={1.700} color="#3f4147" size={17} /></WindowButton>
          <WindowButton><Line d="M5 5L13 13M13 5L5 13" w={2} color="#3f4147" size={17} /></WindowButton>
        </WindowButtons>
      </TabStrip>

      <Toolbar>
        <NavGroup>
          <Slot><Line d="M11.500 2L5.500 9L11.500 16" /></Slot>
          <Slot><Line d="M6.500 2L12.500 9L6.500 16" color="#b9bac0" /></Slot>
          <Slot><Line d="M14 14.200A7.200 7.200 0 1 1 16 7.500"><path d="M12.800 6.200L16.800 4V8.600Z" fill="#5b5d66" strokeWidth=".8" /></Line></Slot>
        </NavGroup>
        <Slot><Line d="M3.500 1.500H14.500V16.500L9 12.500L3.500 16.500Z" /></Slot>
        <AddressBar>
          <svg width="16" height="16" viewBox="0 0 16 16"><circle cx="8" cy="8" r="7" fill="#202127" /><path d="M8 7V11.500M8 4V5.500" stroke="#fff" strokeWidth="1.600" /></svg>
          <Address><b>localhost:</b>3000</Address>
          <Slot $push $w={34}><ZoomOut size={17} strokeWidth={1.900} /></Slot>
          <Slot $w={34}><Line d="M6.500 8L12 5M6.500 10L12 13" size={17}><circle cx="4.300" cy="9" r="2.300" /><circle cx="14" cy="4" r="2" /><circle cx="14" cy="14" r="2" /></Line></Slot>
          <Divider />
          <Slot $w={38}><BraveBadge w={16} /></Slot>
          <Slot $w={30}><BatIcon /></Slot>
        </AddressBar>
        <ToolGroup>
          <Slot>
            <svg width="17" height="17" viewBox="0 0 17 17"><rect width="16" height="16" rx="2" fill="#175ddc" /><path d="M4 3H12V8C12 11 9 13 8 13.500C7 13 4 11 4 8Z" fill="#fff" /><path d="M8 3H4V8C4 11 7 13 8 13.500Z" fill="#175ddc" stroke="#fff" /><rect x="9.500" y="10.500" width="7" height="6" rx="1" fill="#444" /><path d="M11 11V9.500a2 2 0 0 1 4 0V11" stroke="#444" fill="none" /></svg>
          </Slot>
          <Slot>
            <svg width="17" height="17" viewBox="0 0 17 17" fill="none" strokeWidth="3.200"><path d="M8.500 2.200A6.300 6.300 0 0 1 14.800 8.500" stroke="#ff7a59" /><path d="M14.800 8.500A6.300 6.300 0 0 1 8.500 14.800" stroke="#c56cf0" /><path d="M8.500 14.800A6.300 6.300 0 0 1 2.200 8.500" stroke="#39b6f5" /><path d="M2.200 8.500A6.300 6.300 0 0 1 8.500 2.200" stroke="#6edb63" /></svg>
          </Slot>
          <Slot><MdOutlineExtension size={19} /></Slot>
          <Slot><Line d="M2 5H16M3.500 2H14.500a1.500 1.500 0 0 1 1.500 1.500V14.500a1.500 1.500 0 0 1-1.500 1.500H3.500A1.500 1.500 0 0 1 2 14.500V3.500A1.500 1.500 0 0 1 3.500 2M10.500 12L12 13.500"><circle cx="9" cy="10" r="2" /></Line></Slot>
          <Slot $w={18}><Divider /></Slot>
          <Slot><Line d="M2 2H16V16H2Z"><path d="M11.500 2H16V16H11.500Z" fill="#5b5d66" /></Line></Slot>
          <Slot><Line d="M2 4.500C2 2.500 3 2 4 2H13V5M2 4.500C2 5.500 3 6 4 6H16V16H4C3 16 2 15 2 14ZM16 9H12a2 2 0 0 0 0 4H16" /></Slot>
          <Slot><Line d="M8 1.500C8.500 6 10 8 14.500 8.500C10 9 8.500 11 8 15.500C7.500 11 6 9 1.500 8.500C6 8 7.500 6 8 1.500ZM14.500 12V17M12 14.500H17" /></Slot>
          <Slot><Line d="M1.500 3.500H16.500M1.500 9H16.500M1.500 14.500H16.500" /></Slot>
        </ToolGroup>
      </Toolbar>

      <BookmarkBar>
        <svg width="17" height="17" viewBox="0 0 17 17" fill="none" stroke="#5b5d66" strokeWidth="1.500"><rect x="1" y="1" width="5.800" height="5.800" rx="1.500" /><rect x="10" y="1" width="5.800" height="5.800" rx="1.500" /><rect x="1" y="10" width="5.800" height="5.800" rx="1.500" /><rect x="10" y="10" width="5.800" height="5.800" rx="1.500" /></svg>
        <BookmarkHint>Voor een snelle toegang kun je hier bladwijzers op de bladwijzerbalk plaatsen.</BookmarkHint>
        <HintLink>Importeer nu bladwijzers...</HintLink>
        <AllBookmarks>
          <Divider />
          <svg width="17" height="15" viewBox="0 0 17 15"><path d="M0 1H7L8 3H17V15H0Z" fill="#a9a9a9" /><path d="M1 4H17V14H1Z" fill="#cfcfcf" /></svg>
          Alle bookmarks
        </AllBookmarks>
      </BookmarkBar>

      <Body>
        <Viewport>
          <Page>
            <SummaryRow><SummaryCard /><SummaryCard /></SummaryRow>
            <Card>
              <CardHeader>
                <CardTitle><Thermometer size={20} color="#dc2626" />Temperatuur ontwikkeling tijdens de rit</CardTitle>
                <CardText>Temperatuur data vastgelegd tijdens de rit (°C)</CardText>
              </CardHeader>
              <CardBody><TemperatureChart /></CardBody>
            </Card>
            <Card>
              <CardHeader>
                <CardTitle><MapPin size={20} color="#2563eb" />Route Map</CardTitle>
                <CardText>Kaart van de aflegde route met start punt en bestemming</CardText>
              </CardHeader>
              <CardBody>
                <MapFrame>
                  <RouteMap />
                  <MapPanel $corner="top"><RouteIcon size={16} color="#2563eb" />50 km</MapPanel>
                  <MapPanel>
                    <LegendItem><LegendMark $color="#22c55e" />Start</LegendItem>
                    <LegendItem><LegendMark $color="#ef4444" />Bestemming</LegendItem>
                    <LegendItem><LegendMark $color="#3b82f6" $line />Route</LegendItem>
                  </MapPanel>
                </MapFrame>
              </CardBody>
            </Card>
            <Card>
              <CardHeader>
                <CardTitle>Temperatuur Log</CardTitle>
                <CardText>Gedetaileerde temperatuur datalog met timestamps</CardText>
              </CardHeader>
              <CardBody>
                <LogGrid>
                  {readings.map(([km, time, t]) => (
                    <LogItem key={km}>
                      <LogDot />
                      <LogPlace>{km}<LogTime>{time}</LogTime></LogPlace>
                      <LogValue $cold={t < -22}>{`${t.toFixed(1)}°C`}</LogValue>
                    </LogItem>
                  ))}
                </LogGrid>
              </CardBody>
            </Card>
          </Page>
        </Viewport>
        <ScrollTrack>
          <svg width="9" height="6" viewBox="0 0 9 6"><path d="M4.500 0.500L9 5.500H0Z" fill="#858585" /></svg>
          <Thumb />
          <svg width="9" height="6" viewBox="0 0 9 6"><path d="M4.500 5.500L9 0.500H0Z" fill="#858585" /></svg>
        </ScrollTrack>
        <DevBadge>
          <svg width="14" height="14" viewBox="0 0 14 14"><path d="M3 12V2.500L11.500 13.500M10.800 2.500V9" stroke="#fff" strokeWidth="1.300" fill="none" /></svg>
        </DevBadge>
      </Body>

      <Taskbar>
        {launchers.map((icon, i) => <Launcher key={i} $active={i === 4}>{icon}</Launcher>)}
        <Tray>
          {tray.map((icon, i) => <Slot key={i}>{icon}</Slot>)}
          <Slot $w={26}><Line d="M1.500 13L9 5.500L16.500 13" w={1.300} color="#fff" /></Slot>
          <Clock>14:00<small>17-07-2025</small></Clock>
          <Slot $w={36}><svg width="16" height="16" viewBox="0 0 16 16"><path d="M.500 .500H15.500V15.500H.500ZM3 13.500H13" stroke="#fff" fill="none" /></svg></Slot>
        </Tray>
      </Taskbar>
    </Screen>
  );
}
